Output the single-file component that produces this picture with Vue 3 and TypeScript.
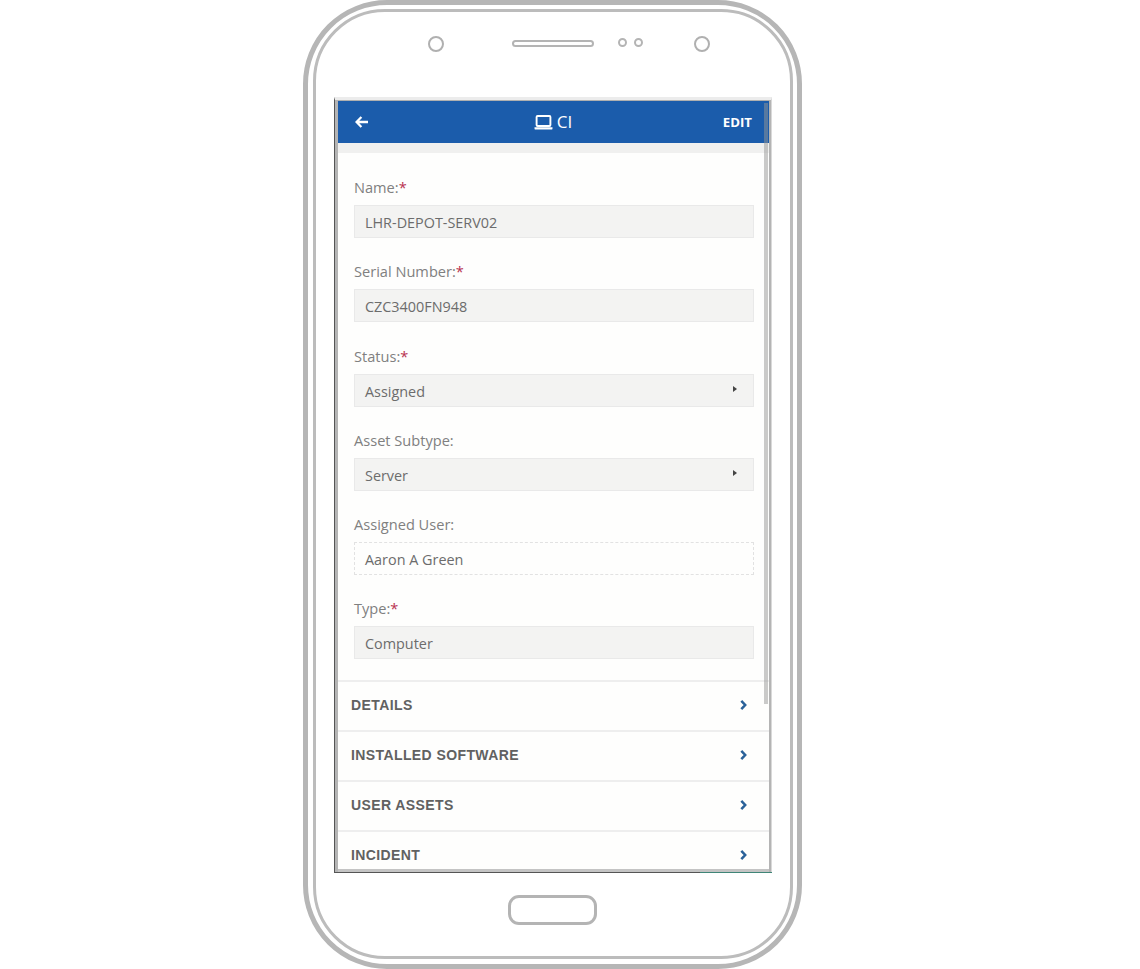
<template>
  <div class="page">
    <div class="phone">
      <div class="phone-inner">
        <div class="sensors">
          <span class="ring"></span>
          <span class="speaker"></span>
          <span class="dots"><i></i><i></i></span>
          <span class="ring"></span>
        </div>

        <div class="screen">
          <header class="topbar">
            <svg class="back" viewBox="0 0 14 12" width="14" height="12">
              <path d="M6.4 1 1.5 6l4.9 5M2 6h11" fill="none" stroke="#fff" stroke-width="2.3" />
            </svg>
            <div class="title">
              <svg viewBox="0 0 19 16" width="19" height="16">
                <rect x="2.6" y="1" width="13.8" height="10" rx="1" fill="none" stroke="#fff" stroke-width="1.9" />
                <path d="M0.5 12.2h18v1.2a1.2 1.2 0 0 1-1.2 1.2H1.7a1.2 1.2 0 0 1-1.2-1.2z" fill="#fff" />
              </svg>
              <span>CI</span>
            </div>
            <span class="edit">EDIT</span>
          </header>
          <div class="shade"></div>

          <div class="body">
            <form class="fields" @submit.prevent>
              <div v-for="f in fields" :key="f.label" class="field">
                <label>{{ f.label }}:<b v-if="f.required">*</b></label>
                <div class="value" :class="{ dashed: f.dashed }">
                  <span>{{ f.value }}</span>
                  <i v-if="f.select" class="caret"></i>
                </div>
              </div>
            </form>

            <ul class="sections">
              <li v-for="s in sections" :key="s">
                <span>{{ s }}</span>
                <svg viewBox="0 0 7 10" width="7" height="10">
                  <path d="M1.3 0.9 5.2 5 1.3 9.1" fill="none" stroke="#2a6199" stroke-width="2.5" />
                </svg>
              </li>
            </ul>
          </div>

          <div class="scrollbar"></div>
        </div>

        <div class="home"><span></span></div>
      </div>
    </div>
  </div>
</template>

<script setup lang="ts">
interface Field {
  label: string
  value: string
  required?: boolean
  select?: boolean
  dashed?: boolean
}

const fields: Field[] = [
  { label: 'Name', value: 'LHR-DEPOT-SERV02', required: true },
  { label: 'Serial Number', value: 'CZC3400FN948', required: true },
  { label: 'Status', value: 'Assigned', required: true, select: true },
  { label: 'Asset Subtype', value: 'Server', select: true },
  { label: 'Assigned User', value: 'Aaron A Green', dashed: true },
  { label: 'Type', value: 'Computer', required: true }
]

const sections = ['DETAILS', 'INSTALLED SOFTWARE', 'USER ASSETS', 'INCIDENT']
</script>

<style>
html,
body {
  margin: 0;
  background: #fff;
}
</style>

<style scoped>
.page {
  width: 1140px;
  height: 969px;
  padding-left: 303px;
  box-sizing: border-box;
  overflow: hidden;
  background: #fff;
  font-family: 'Open Sans', sans-serif;
}

.phone {
  width: 499px;
  height: 969px;
  box-sizing: border-box;
  border: 5px solid #b6b6b6;
  border-radius: 84px;
  padding: 4px 4px 5px 5px;
}

.phone-inner {
  height: 100%;
  box-sizing: border-box;
  border: 3px solid #bcbcbc;
  border-radius: 72px;
  padding: 0 18px;
  display: flex;
  flex-direction: column;
}

.sensors {
  height: 85px;
  flex-shrink: 0;
  display: flex;
  align-items: flex-start;
  padding-top: 24px;
  padding-left: 94px;
  box-sizing: border-box;
}

.ring {
  width: 16px;
  height: 16px;
  box-sizing: border-box;
  border: 2.5px solid #b0b0b0;
  border-radius: 50%;
}

.speaker {
  width: 82px;
  height: 7px;
  margin: 4px 0 0 68px;
  box-sizing: border-box;
  border: 2px solid #b4b4b4;
  border-radius: 4px;
}

.dots {
  display: flex;
  gap: 7px;
  margin: 2px 0 0 24px;
}

.dots i {
  width: 9px;
  height: 9px;
  box-sizing: border-box;
  border: 2px solid #b4b4b4;
  border-radius: 50%;
}

.ring:last-child {
  margin-left: 51px;
}

.screen {
  position: relative;
  height: 776px;
  flex-shrink: 0;
  box-sizing: border-box;
  border: 1px solid #d9d9d9;
  border-top: 3px solid #ececec;
  border-left: 1px solid #555;
  border-bottom: 1px solid #555;
  box-shadow: inset 3px 0 0 #b4b4b4, inset -2px 0 0 #b4b4b4, inset 0 -3px 0 #c4c4c4, inset 0 1px 0 #b0b0b0;
  padding: 1px 2px 3px 3px;
  display: flex;
  flex-direction: column;
  background: #fefefd;
}

/* teal sliver along the bottom right edge of the capture */
.screen::after {
  content: '';
  position: absolute;
  right: -1px;
  bottom: -1px;
  width: 72px;
  height: 1px;
  background: #3f8577;
}

.topbar {
  height: 42px;
  flex-shrink: 0;
  background: #1b5cab;
  color: #fff;
  display: flex;
  align-items: center;
  justify-content: space-between;
  padding: 0 17px 0 17px;
}

.title {
  display: flex;
  align-items: center;
  gap: 4px;
  font-size: 17px;
  margin-left: 14px;
  margin-top: -2px;
}

.title svg {
  margin-top: 3px;
}

.edit {
  font-size: 13.2px;
  font-weight: 700;
}

.shade {
  height: 10px;
  flex-shrink: 0;
  background: #f0f0ef;
}

.body {
  flex: 1;
  min-height: 0;
  overflow: hidden;
}

.fields {
  padding: 24px 15px 0 16px;
  display: flex;
  flex-direction: column;
  gap: 23.3px;
}

.field label {
  display: block;
  height: 28px;
  font-size: 14.6px;
  line-height: 21px;
  color: #808080;
}

.field b {
  color: #b8324f;
  font-weight: 400;
}

.value {
  height: 33px;
  box-sizing: border-box;
  border: 1px solid #e9e9e9;
  background: #f3f3f2;
  padding: 0 16px 0 10px;
  display: flex;
  align-items: center;
  justify-content: space-between;
  font-size: 14.4px;
  color: #6c6c6c;
}

.value span {
  margin-top: 2px;
}

.value.dashed {
  background: transparent;
  border: 1px dashed #e2e2e2;
}

.caret {
  width: 0;
  height: 0;
  margin-top: -2px;
  border-left: 4px solid #444;
  border-top: 3.5px solid transparent;
  border-bottom: 3.5px solid transparent;
}

.sections {
  list-style: none;
  margin: 21px 0 0;
  padding: 0;
}

.sections li {
  height: 50px;
  box-sizing: border-box;
  border-top: 2px solid #eeeeee;
  padding: 0 22px 0 13px;
  display: flex;
  align-items: center;
  justify-content: space-between;
  font-family: 'Liberation Sans', sans-serif;
  font-size: 14px;
  font-weight: 700;
  letter-spacing: 0.4px;
  color: #616161;
}

.sections li span,
.sections li svg {
  margin-top: -2px;
}

.scrollbar {
  position: absolute;
  top: 3px;
  right: 3px;
  width: 4px;
  height: 601px;
  background: rgba(150, 150, 150, 0.5);
}

.home {
  flex: 1;
  display: flex;
  align-items: flex-start;
  justify-content: center;
  padding-top: 22px;
}

.home span {
  width: 89px;
  height: 30px;
  box-sizing: border-box;
  border: 3px solid #b4b4b4;
  border-radius: 11px;
  margin-left: -1px;
}
</style>
